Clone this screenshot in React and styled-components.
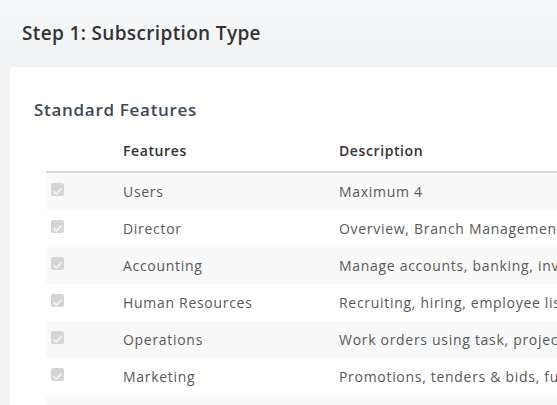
import React from "react";
import styled, { createGlobalStyle } from "styled-components";

const Global = createGlobalStyle`
  html, body {
    margin: 0;
    padding: 0;
    background: #f3f4f6;
    overflow: hidden;
  }
  body {
    font-family: "Open Sans", "DejaVu Sans", sans-serif;
    color: #333;
  }
`;

const Page = styled.div`
  width: 100vw;
  height: 100vh;
  overflow: hidden;
  background: linear-gradient(180deg, #f6f7f8 0%, #f2f3f5 60px, #f3f4f6 100%);
`;

const StepTitle = styled.h1`
  margin: 0;
  padding: 21px 22px 0;
  height: 67px;
  box-sizing: border-box;
  font-size: 19px;
  font-weight: 600;
  letter-spacing: 0.35px;
  color: #333;
  line-height: 24px;
`;

const Card = styled.div`
  margin: 0 0 0 10px;
  width: 1000px;
  background: #fff;
  border-radius: 4px;
  padding: 32px 24px 0;
  min-height: 340px;
`;

const SectionTitle = styled.h2`
  margin: 0 0 8px;
  font-size: 17px;
  font-weight: 600;
  letter-spacing: 0.7px;
  color: #3d4a5c;
  line-height: 22px;
`;

const Table = styled.table`
  margin-left: 12px;
  border-collapse: collapse;
  width: 960px;
  font-size: 14px;
`;

const Th = styled.th`
  text-align: left;
  font-weight: 600;
  letter-spacing: 0.6px;
  color: #333;
  height: 42px;
  padding: 0 12px;
  border-bottom: 2px solid #d9d9d9;
  width: ${({ $w }) => $w || "auto"};
`;

const Row = styled.tr`
  background: ${({ $striped }) => ($striped ? "#f9f9f9" : "#fff")};
`;

const Td = styled.td`
  height: 37px;
  padding: 0 12px;
  color: #585858;
  letter-spacing: 0.7px;
  white-space: nowrap;
`;

const CheckCell = styled.td`
  height: 37px;
  padding: 0 5px;
  vertical-align: middle;
`;

const Box = styled.span`
  display: block;
  width: 13px;
  height: 13px;
  border-radius: 2px;
  background: #d5d5d5;
  margin-top: -4px;
`;

const features = [
  ["Users", "Maximum 4"],
  ["Director", "Overview, Branch Management, Company settings and reporting"],
  ["Accounting", "Manage accounts, banking, invoices, bills and expenses"],
  ["Human Resources", "Recruiting, hiring, employee list, leave and payroll"],
  ["Operations", "Work orders using task, projects and scheduling"],
  ["Marketing", "Promotions, tenders & bids, funnels and campaigns"],
  ["Sales", "Quotes, orders and customer management"],
];

function Check() {
  return (
    <Box>
      <svg width="13" height="13" viewBox="0 0 13 13">
        <path d="M3 6.8 L5.4 9.2 L10 4" fill="none" stroke="#f4f4f4" strokeWidth="1.8" strokeLinecap="round" strokeLinejoin="round" />
      </svg>
    </Box>
  );
}

export default function App() {
  return (
    <Page>
      <Global />
      <StepTitle>Step 1: Subscription Type</StepTitle>
      <Card>
        <SectionTitle>Standard Features</SectionTitle>
        <Table>
          <thead>
            <tr>
              <Th $w="41px" />
              <Th $w="192px">Features</Th>
              <Th>Description</Th>
            </tr>
          </thead>
          <tbody>
            {features.map(([name, desc], i) => (
              <Row key={name} $striped={i % 2 === 0}>
                <CheckCell>
                  <Check />
                </CheckCell>
                <Td>{name}</Td>
                <Td>{desc}</Td>
              </Row>
            ))}
          </tbody>
        </Table>
      </Card>
    </Page>
  );
}
